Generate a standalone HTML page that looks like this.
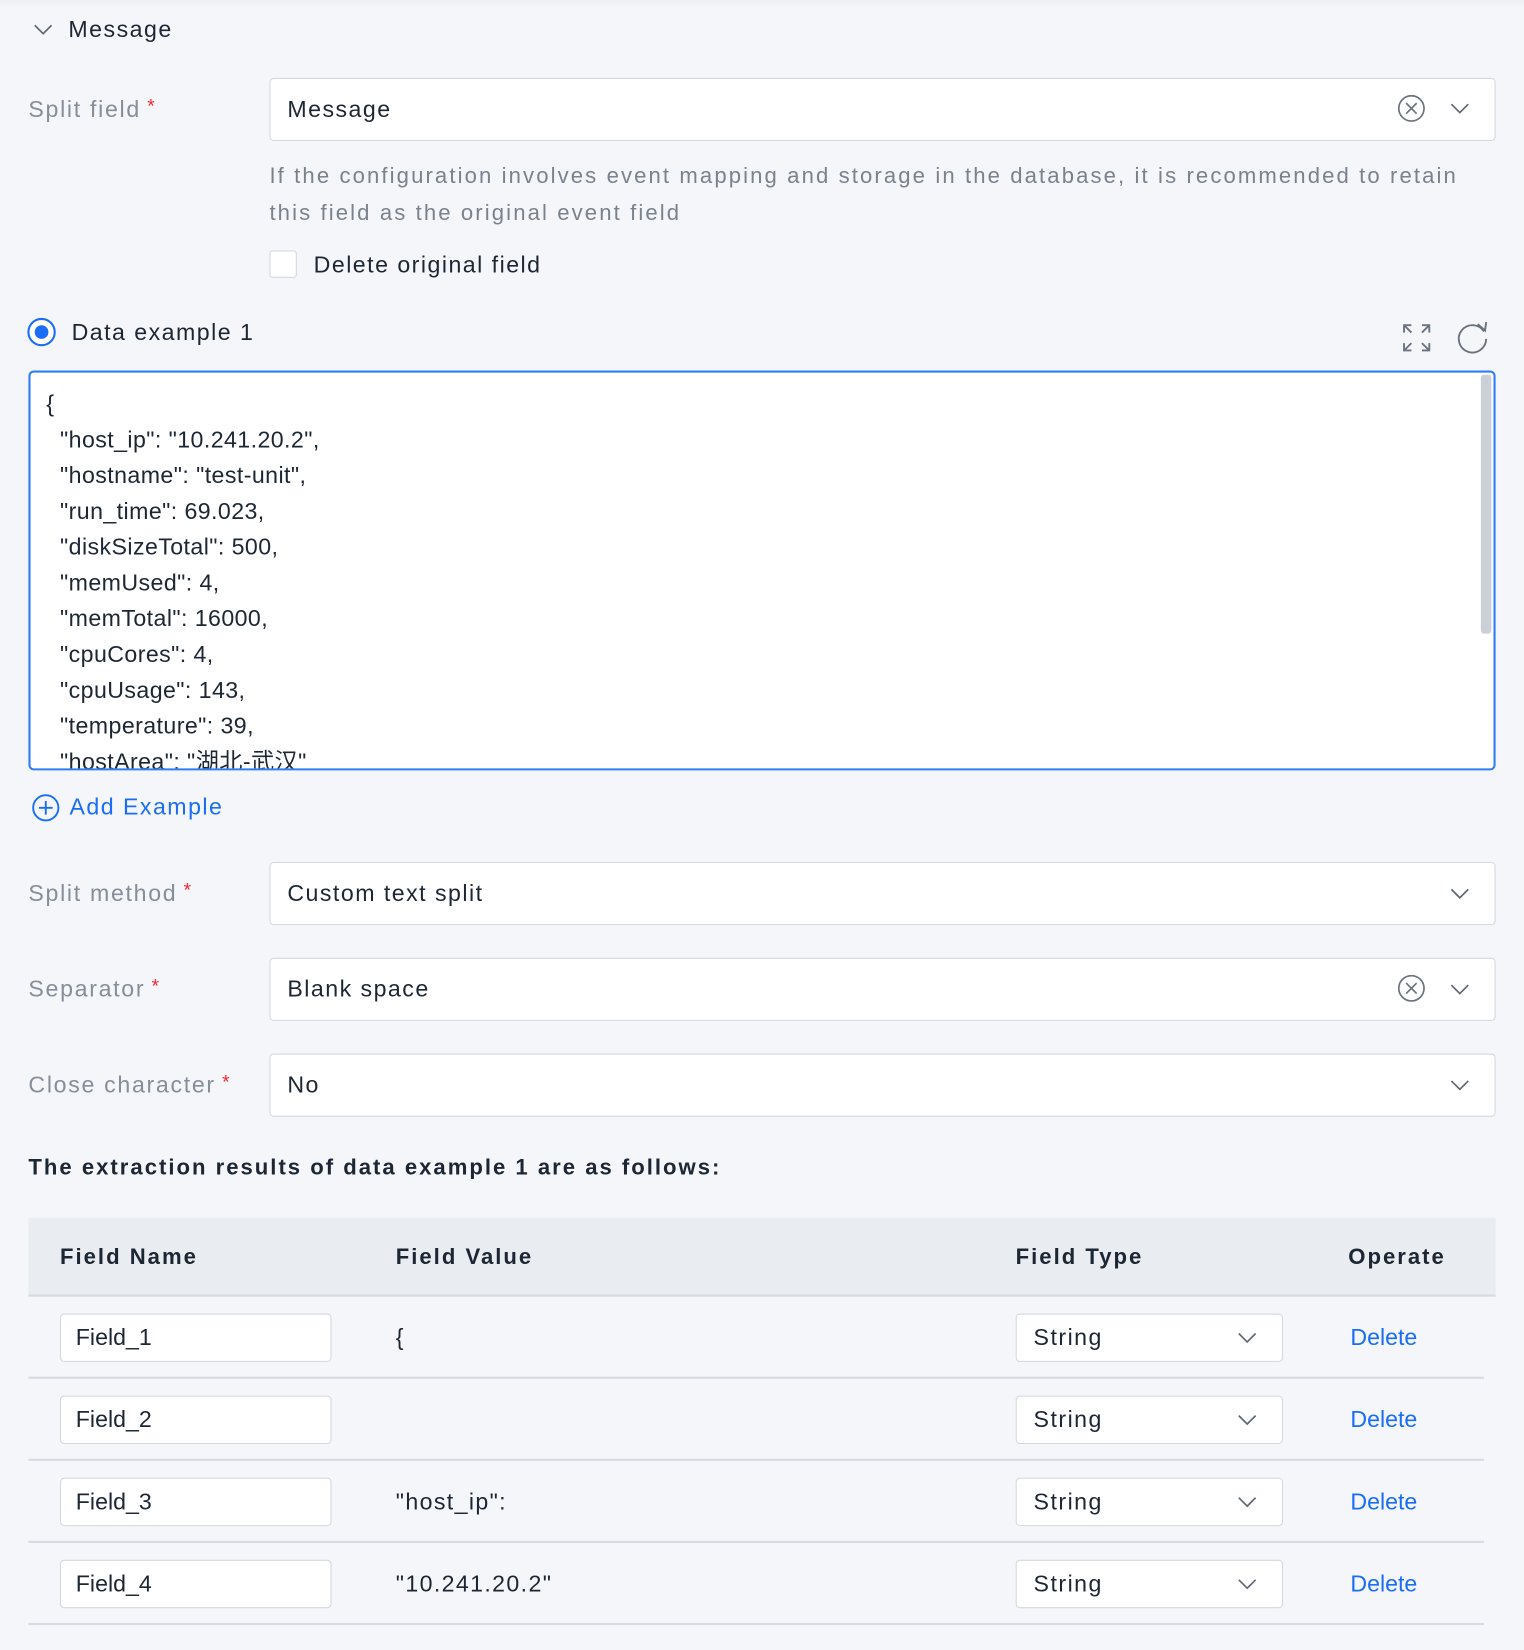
<!DOCTYPE html>
<html><head><meta charset="utf-8"><style>
html,body{margin:0;padding:0;width:1524px;height:1650px;overflow:hidden;background:#f5f6fa}
#w{position:absolute;left:0;top:0;width:1448px;height:1568px;transform:scale(1.0525);transform-origin:0 0;font-family:"Liberation Sans","Noto Sans CJK SC",sans-serif;color:#1d2633}
.a{position:absolute;white-space:nowrap}
.t{font-size:22px;line-height:30px;letter-spacing:1.4px}
.lbl{color:#868e99;letter-spacing:1.6px}
.req{color:#f5222d;font-size:18px;margin-left:6px;vertical-align:4px;line-height:10px}
.box{position:absolute;background:#fff;border:1.5px solid #d3d8df;border-radius:4px;box-sizing:border-box}
.blue{color:#1a6ef5}
.code{font-size:22px;line-height:34px;letter-spacing:0.4px}
.hd{font-weight:bold;font-size:21px;letter-spacing:1.9px}
.line{position:absolute;height:2px;background:#d6dbe1}
.v{letter-spacing:1.3px}
</style></head><body><div id="w">
<div class="a" style="left:0;top:0;width:1448px;height:6px;background:linear-gradient(#eceef2,#f5f6fa)"></div>
<svg class="a" style="left:31px;top:20px" width="20" height="16"><path d="M2 4 L10 12 L18 4" fill="none" stroke="#5f6874" stroke-width="1.6"/></svg>
<div class="a t" style="left:65px;top:13px">Message</div>

<div class="a t lbl" style="left:27px;top:89px">Split field<span class="req">*</span></div>
<div class="box" style="left:256px;top:74px;width:1165px;height:60px"></div>
<div class="a t" style="left:273px;top:89px">Message</div>
<svg class="a" style="left:1327px;top:89px" width="28" height="28"><circle cx="14" cy="14" r="12" fill="none" stroke="#6b737e" stroke-width="1.6"/><path d="M9 9 L19 19 M19 9 L9 19" stroke="#6b737e" stroke-width="1.6"/></svg>
<svg class="a" style="left:1377px;top:96px" width="20" height="14"><path d="M2 3 L10 11 L18 3" fill="none" stroke="#5f6874" stroke-width="1.6"/></svg>

<div class="a" style="left:256px;top:150px;font-size:21px;line-height:35px;letter-spacing:2px;color:#7a828d">If the configuration involves event mapping and storage in the database, it is recommended to retain<br>this field as the original event field</div>
<div class="box" style="left:256px;top:238px;width:26px;height:26px;border-radius:3px"></div>
<div class="a t" style="left:298px;top:237px">Delete original field</div>

<div class="a" style="left:26px;top:302px;width:27px;height:27px;border:2px solid #1a6ef5;border-radius:50%;box-sizing:border-box;background:#fff"></div>
<div class="a" style="left:33px;top:309px;width:13px;height:13px;background:#1a6ef5;border-radius:50%"></div>
<div class="a t" style="left:68px;top:301px">Data example 1</div>
<svg class="a" style="left:1331px;top:306px" width="30" height="30" fill="none" stroke="#6b737e" stroke-width="1.8"><path d="M3 10 V3 H10 M3 3 L10 10 M20 3 H27 V10 M27 3 L20 10 M3 20 V27 H10 M3 27 L10 20 M27 20 V27 H20 M27 27 L20 20"/></svg>
<svg class="a" style="left:1382px;top:304px" width="34" height="34" fill="none" stroke="#6b737e" stroke-width="1.8"><path d="M28 11 A13 13 0 1 0 30 18"/><path d="M22 4 L29 10 L30 2"/></svg>

<div class="a" style="left:27px;top:352px;width:1394px;height:380px;border:2px solid #2f7df6;border-radius:5px;background:#fff;box-sizing:border-box;overflow:hidden">
<div class="a" style="right:2px;top:2px;width:10px;height:246px;background:#cbd0d6;border-radius:3px"></div>
<div class="a code" style="left:15px;top:13px">{<br>&nbsp;&nbsp;"host_ip": "10.241.20.2",<br>&nbsp;&nbsp;"hostname": "test-unit",<br>&nbsp;&nbsp;"run_time": 69.023,<br>&nbsp;&nbsp;"diskSizeTotal": 500,<br>&nbsp;&nbsp;"memUsed": 4,<br>&nbsp;&nbsp;"memTotal": 16000,<br>&nbsp;&nbsp;"cpuCores": 4,<br>&nbsp;&nbsp;"cpuUsage": 143,<br>&nbsp;&nbsp;"temperature": 39,<br>&nbsp;&nbsp;"hostArea": "湖北-武汉"</div>
</div>

<svg class="a" style="left:30px;top:754px" width="27" height="27" fill="none" stroke="#1a6ef5" stroke-width="1.8"><circle cx="13.5" cy="13.5" r="12"/><path d="M13.5 7 V20 M7 13.5 H20"/></svg>
<div class="a t blue" style="left:66px;top:752px">Add Example</div>

<div class="a t lbl" style="left:27px;top:834px">Split method<span class="req">*</span></div>
<div class="box" style="left:256px;top:819px;width:1165px;height:60px"></div>
<div class="a t" style="left:273px;top:834px">Custom text split</div>
<svg class="a" style="left:1377px;top:842px" width="20" height="14"><path d="M2 3 L10 11 L18 3" fill="none" stroke="#5f6874" stroke-width="1.6"/></svg>

<div class="a t lbl" style="left:27px;top:925px">Separator<span class="req">*</span></div>
<div class="box" style="left:256px;top:910px;width:1165px;height:60px"></div>
<div class="a t" style="left:273px;top:925px">Blank space</div>
<svg class="a" style="left:1327px;top:925px" width="28" height="28"><circle cx="14" cy="14" r="12" fill="none" stroke="#6b737e" stroke-width="1.6"/><path d="M9 9 L19 19 M19 9 L9 19" stroke="#6b737e" stroke-width="1.6"/></svg>
<svg class="a" style="left:1377px;top:933px" width="20" height="14"><path d="M2 3 L10 11 L18 3" fill="none" stroke="#5f6874" stroke-width="1.6"/></svg>

<div class="a t lbl" style="left:27px;top:1016px">Close character<span class="req">*</span></div>
<div class="box" style="left:256px;top:1001px;width:1165px;height:60px"></div>
<div class="a t" style="left:273px;top:1016px">No</div>
<svg class="a" style="left:1377px;top:1024px" width="20" height="14"><path d="M2 3 L10 11 L18 3" fill="none" stroke="#5f6874" stroke-width="1.6"/></svg>

<div class="a hd" style="left:27px;top:1095px;line-height:30px">The extraction results of data example 1 are as follows:</div>

<div class="a" style="left:27px;top:1157px;width:1394px;height:74px;background:#e9ecf0"></div>
<div class="line" style="left:27px;top:1230px;width:1394px"></div>
<div class="a hd" style="left:57px;top:1180px;line-height:30px">Field Name</div>
<div class="a hd" style="left:376px;top:1180px;line-height:30px">Field Value</div>
<div class="a hd" style="left:965px;top:1180px;line-height:30px">Field Type</div>
<div class="a hd" style="left:1281px;top:1180px;line-height:30px">Operate</div>

<div class="box" style="left:57px;top:1248px;width:258px;height:46px"></div><div class="a t" style="left:72px;top:1256px;letter-spacing:0">Field_1</div><div class="a t v" style="left:376px;top:1256px">{</div>
<div class="box" style="left:965px;top:1248px;width:254px;height:46px"></div><div class="a t" style="left:982px;top:1256px">String</div><svg class="a" style="left:1175px;top:1264px" width="20" height="14"><path d="M2 3 L10 11 L18 3" fill="none" stroke="#5f6874" stroke-width="1.6"/></svg><div class="a t blue" style="left:1283px;top:1256px;letter-spacing:0">Delete</div>
<div class="line" style="left:27px;top:1308px;width:1383px"></div>

<div class="box" style="left:57px;top:1326px;width:258px;height:46px"></div><div class="a t" style="left:72px;top:1334px;letter-spacing:0">Field_2</div>
<div class="box" style="left:965px;top:1326px;width:254px;height:46px"></div><div class="a t" style="left:982px;top:1334px">String</div><svg class="a" style="left:1175px;top:1342px" width="20" height="14"><path d="M2 3 L10 11 L18 3" fill="none" stroke="#5f6874" stroke-width="1.6"/></svg><div class="a t blue" style="left:1283px;top:1334px;letter-spacing:0">Delete</div>
<div class="line" style="left:27px;top:1386px;width:1383px"></div>

<div class="box" style="left:57px;top:1404px;width:258px;height:46px"></div><div class="a t" style="left:72px;top:1412px;letter-spacing:0">Field_3</div><div class="a t v" style="left:376px;top:1412px">"host_ip":</div>
<div class="box" style="left:965px;top:1404px;width:254px;height:46px"></div><div class="a t" style="left:982px;top:1412px">String</div><svg class="a" style="left:1175px;top:1420px" width="20" height="14"><path d="M2 3 L10 11 L18 3" fill="none" stroke="#5f6874" stroke-width="1.6"/></svg><div class="a t blue" style="left:1283px;top:1412px;letter-spacing:0">Delete</div>
<div class="line" style="left:27px;top:1464px;width:1383px"></div>

<div class="box" style="left:57px;top:1482px;width:258px;height:46px"></div><div class="a t" style="left:72px;top:1490px;letter-spacing:0">Field_4</div><div class="a t v" style="left:376px;top:1490px">"10.241.20.2"</div>
<div class="box" style="left:965px;top:1482px;width:254px;height:46px"></div><div class="a t" style="left:982px;top:1490px">String</div><svg class="a" style="left:1175px;top:1498px" width="20" height="14"><path d="M2 3 L10 11 L18 3" fill="none" stroke="#5f6874" stroke-width="1.6"/></svg><div class="a t blue" style="left:1283px;top:1490px;letter-spacing:0">Delete</div>
<div class="line" style="left:27px;top:1542px;width:1383px"></div>
</div></body></html>
